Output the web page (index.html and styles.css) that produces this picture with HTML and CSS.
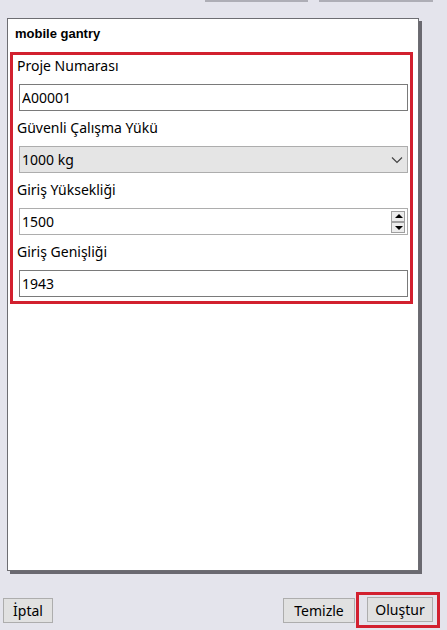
FILE: index.html
```html
<!DOCTYPE html>
<html lang="tr">
  <head>
    <meta charset="UTF-8" />
    <meta name="viewport" content="width=device-width, initial-scale=1.0" />
    <title>mobile gantry</title>
    <link rel="stylesheet" href="styles.css">
  </head>
  <body>
    <div class="topbar">
      <span class="tab-a"></span>
      <span class="tab-b"></span>
    </div>

    <div class="panel">
      <h1 class="title">mobile gantry</h1>
      <div class="fields">
        <div class="field">
          <label for="proje">Proje Numarası</label>
          <input id="proje" class="box" type="text" value="A00001" />
        </div>
        <div class="field">
          <label>Güvenli Çalışma Yükü</label>
          <div class="box select">
            <span>1000 kg</span>
            <svg width="12" height="8" viewBox="0 0 12 8">
              <path d="M1 1.5 L6 6.5 L11 1.5" fill="none" stroke="#444" stroke-width="1.2" />
            </svg>
          </div>
        </div>
        <div class="field">
          <label>Giriş Yüksekliği</label>
          <div class="box spin">
            <span>1500</span>
            <div class="spin-btns">
              <button type="button" class="up"></button>
              <button type="button" class="down"></button>
            </div>
          </div>
        </div>
        <div class="field">
          <label for="genislik">Giriş Genişliği</label>
          <input id="genislik" class="box" type="text" value="1943" />
        </div>
      </div>
    </div>

    <div class="footer">
      <button type="button" class="btn btn-cancel">İptal</button>
      <div class="actions">
        <button type="button" class="btn btn-clear">Temizle</button>
        <div class="mark">
          <button type="button" class="btn btn-create">Oluştur</button>
        </div>
      </div>
    </div>
  </body>
</html>
```

FILE: styles.css
```css
* {
  margin: 0;
  padding: 0;
  box-sizing: border-box;
}

body {
  background: #e4e4ec;
  font-family: "Noto Sans", "Open Sans", sans-serif;
  font-size: 14px;
  color: #000;
  width: 447px;
  height: 630px;
  overflow: hidden;
}

.topbar {
  display: flex;
  height: 18px;
  padding-left: 205px;
  gap: 11px;
}

.topbar span {
  height: 2px;
  background: #aeaeb6;
}

.tab-a {
  width: 103px;
}

.tab-b {
  width: 114px;
}

.panel {
  margin-left: 7px;
  width: 412px;
  height: 553px;
  background: #fff;
  border: 1px solid #6d6d72;
  box-shadow: 3px 3px 0 #6a6970;
  padding: 0 2px;
}

.title {
  font-family: "Liberation Sans", Arial, sans-serif;
  font-size: 13px;
  font-weight: bold;
  line-height: 16px;
  padding: 7px 0 10px 5px;
}

.fields {
  width: 403px;
  border: 3px solid #d2202f;
  padding: 1px 2px 4px 0;
}

.field label {
  display: block;
  line-height: 20px;
  margin: 7px 0 8px 4px;
}

.field:first-child label {
  margin-top: 0;
}

.box {
  display: flex;
  align-items: center;
  width: 389px;
  height: 27px;
  margin-left: 6px;
  border: 1px solid #7a7a7a;
  background: #fff;
  font: inherit;
  padding-left: 2px;
  outline: none;
}

.select {
  background: #e5e5e5;
  border-color: #adadad;
  justify-content: space-between;
  padding-right: 4px;
}

.spin {
  border-color: #adadad;
  justify-content: space-between;
  padding-right: 2px;
}

.spin-btns {
  display: flex;
  flex-direction: column;
}

.spin-btns button {
  width: 14px;
  height: 11px;
  border: 1px solid #a0a0a0;
  background: #ececec;
  position: relative;
}

.spin-btns button::after {
  content: "";
  position: absolute;
  left: 2.5px;
  border-left: 4px solid transparent;
  border-right: 4px solid transparent;
}

.up::after {
  top: 2px;
  border-bottom: 4px solid #000;
}

.down::after {
  top: 3px;
  border-top: 4px solid #000;
}

.footer {
  display: flex;
  justify-content: space-between;
  align-items: center;
  margin-top: 21px;
  padding: 0 7px 0 3px;
}

.actions {
  display: flex;
  align-items: center;
  gap: 1px;
}

.btn {
  height: 25px;
  font: inherit;
  text-align: center;
  background: #e1e1e1;
  border: 1px solid #adadad;
}

.btn-cancel {
  width: 50px;
}

.btn-clear {
  width: 72px;
}

.btn-create {
  width: 66px;
  display: block;
}

.mark {
  border: 3px solid #d2202f;
  padding: 2px 4px 3px 8px;
}
```
